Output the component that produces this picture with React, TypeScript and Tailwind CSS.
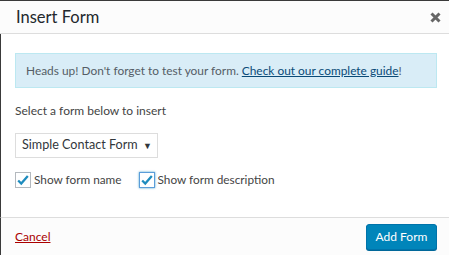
import React from "react";

function Check({ focus }: { focus?: boolean }) {
  return (
    <span
      className={
        "flex h-4 w-4 shrink-0 items-center justify-center border bg-white " +
        (focus ? "border-[#5b9dd9] shadow-[0_0_2px_rgba(30,140,190,0.8)]" : "border-[#b4b9be]")
      }
    >
      <svg width="14" height="14" viewBox="0 0 16 16">
        <path d="M2.5 8.5 L6 12 L13.5 3.5" fill="none" stroke="#1e8cbe" strokeWidth="2.6" />
      </svg>
    </span>
  );
}

export default function App() {
  return (
    <div
      className="flex h-[255px] w-[449px] flex-col overflow-hidden whitespace-nowrap border-t border-[#3a3a3a] bg-white text-[#444]"
      style={{ fontFamily: "Lato, 'Open Sans', sans-serif" }}
    >
      <div className="flex h-[33px] items-center justify-between border-b border-[#dddddd] bg-[#fcfcfc] pl-4 pr-[8px]">
        <span className="text-[16.5px] font-normal text-[#23282d]">Insert Form</span>
        <svg width="11" height="11" viewBox="0 0 11 11">
          <path d="M1.5 1.5 L9.5 9.5 M9.5 1.5 L1.5 9.5" stroke="#666" strokeWidth="3" />
        </svg>
      </div>
      <div className="flex flex-1 flex-col border-l border-[#3a3a3a] pl-[14px] pr-3">
        <div className="mt-[19px] flex h-[35px] w-[422px] items-center border border-[#bce8f1] bg-[#d9edf7] px-[10px] text-[11.9px] text-[#555d66]">
          <span>
            Heads up! Don't forget to test your form.{" "}
            <span className="text-[#0a4b78] underline">Check out our complete guide</span>!
          </span>
        </div>
        <div className="mt-[14px] text-[12px] text-[#444]">Select a form below to insert</div>
        <div className="mt-[13px] flex h-[25px] w-[143px] items-center justify-between border border-[#dddddd] bg-white pl-[6px] pr-[5px] text-[12.6px] text-[#32373c]">
          <span>Simple Contact Form</span>
          <span className="text-[9px]">▼</span>
        </div>
        <div className="mt-[13px] flex items-center text-[11.8px] text-[#444]">
          <Check />
          <span className="ml-[3px]">Show form name</span>
          <span className="ml-[17px]">
            <Check focus />
          </span>
          <span className="ml-[3px]">Show form description</span>
        </div>
      </div>
      <div className="flex h-[38px] items-center justify-between border-t border-l border-t-[#dddddd] border-l-[#3a3a3a] bg-[#fcfcfc] pl-[14px] pr-[12px]">
        <span className="text-[12px] text-[#a00] underline">Cancel</span>
        <button className="h-[26px] w-[71px] rounded-[3px] border border-[#0073aa] bg-[#0085ba] text-[12px] text-white shadow-[0_1px_0_#006799]">
          Add Form
        </button>
      </div>
    </div>
  );
}
